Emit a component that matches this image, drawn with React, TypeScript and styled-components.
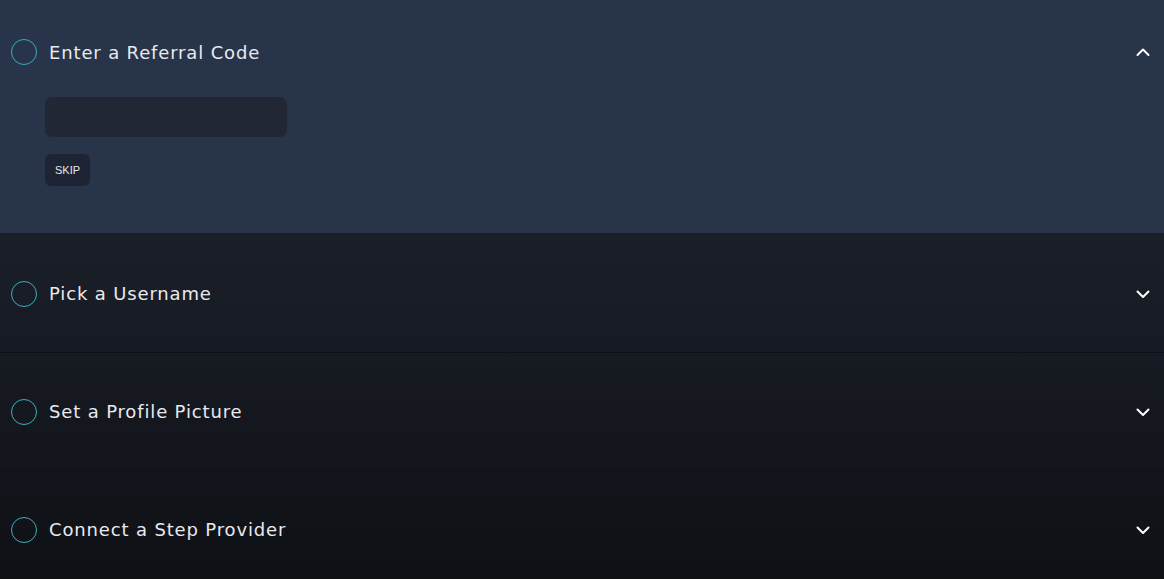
import React from "react";
import styled, { createGlobalStyle } from "styled-components";

const Global = createGlobalStyle`
  html, body { margin: 0; padding: 0; background: #0e1014; }
  body { font-family: "DejaVu Sans", sans-serif; }
  * { box-sizing: border-box; }
`;

const Page = styled.div`
  width: 100%;
  min-height: 100vh;
  display: flex;
  flex-direction: column;
  background: linear-gradient(180deg, #232936 0%, #1b1f29 40%, #0e1014 100%);
`;

const Item = styled.section<{ $open?: boolean }>`
  display: flex;
  flex-direction: column;
  background: ${(p) => (p.$open ? "#283449" : "transparent")};
  border-bottom: ${(p) => (p.$open ? "2px solid #171c25" : "1px solid #0d1016")};
`;

const Header = styled.div<{ $open?: boolean }>`
  display: flex;
  align-items: center;
  gap: 12px;
  padding: ${(p) => (p.$open ? "39px 14px 32px 11px" : "0 14px 0 11px")};
  height: ${(p) => (p.$open ? "97px" : "117px")};
`;

const Circle = styled.span`
  width: 26px;
  height: 26px;
  border-radius: 50%;
  border: 1.8px solid #3cb0bf;
  flex: none;
`;

const Title = styled.span`
  flex: 1;
  color: #e8eaee;
  font-family: "DejaVu Sans", sans-serif;
  font-size: 18px;
  font-weight: 400;
  letter-spacing: 0.85px;
`;

const Chevron = styled.svg`
  width: 14px;
  height: 14px;
  flex: none;
`;

const Body = styled.div`
  display: flex;
  flex-direction: column;
  align-items: flex-start;
  gap: 17px;
  padding: 0 0 47px 45px;
`;

const Input = styled.input`
  width: 242px;
  height: 40px;
  border: none;
  border-radius: 7px;
  background: #212735;
  color: #eceef2;
  outline: none;
  padding: 0 12px;
`;

const Button = styled.button`
  height: 32px;
  padding: 0 10px;
  border: none;
  border-radius: 6px;
  background: #1f2434;
  color: #e6e8ec;
  font-family: "Liberation Sans", Arial, sans-serif;
  font-size: 11px;
`;

const ChevronIcon = ({ up }: { up?: boolean }) => (
  <Chevron viewBox="0 0 14 14" fill="none">
    <polyline
      points={up ? "1.5,10 7,4.5 12.5,10" : "1.5,4.5 7,10 12.5,4.5"}
      stroke="#ffffff"
      strokeWidth="2"
      strokeLinecap="round"
      strokeLinejoin="round"
    />
  </Chevron>
);

const steps = ["Pick a Username", "Set a Profile Picture", "Connect a Step Provider"];

export default function App() {
  return (
    <>
      <Global />
      <Page>
        <Item $open>
          <Header $open>
            <Circle />
            <Title>Enter a Referral Code</Title>
            <ChevronIcon up />
          </Header>
          <Body>
            <Input />
            <Button>SKIP</Button>
          </Body>
        </Item>
        {steps.map((s) => (
          <Item key={s}>
            <Header>
              <Circle />
              <Title>{s}</Title>
              <ChevronIcon />
            </Header>
          </Item>
        ))}
      </Page>
    </>
  );
}
